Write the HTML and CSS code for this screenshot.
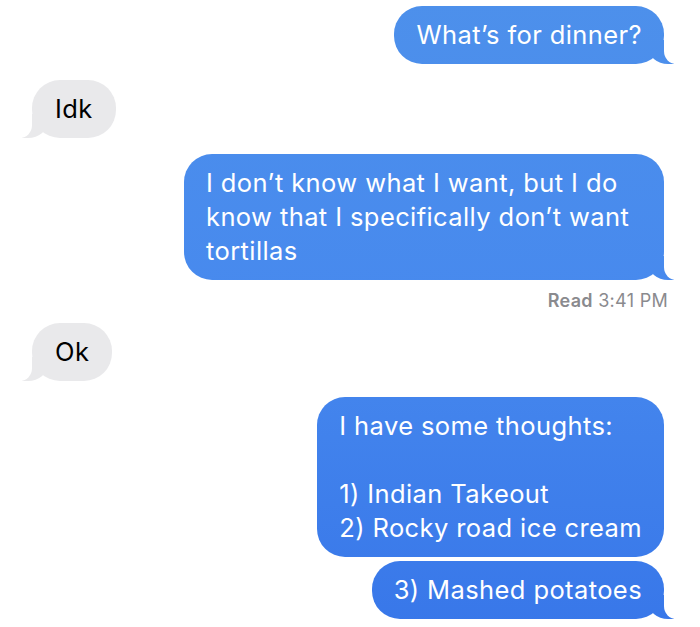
FILE: index.html
```html
<!DOCTYPE html>
<html>
  <head>
    <title>Messages</title>
    <link rel="stylesheet" href="styles.css">
  </head>
  <body>
    <div class="thread">
      <div class="bubble sent tail">What’s for dinner?</div>
      <div class="bubble received tail">Idk</div>
      <div class="bubble sent tail">I don’t know what I want, but I do know that I specifically don’t want tortillas</div>
      <div class="status"><b>Read</b> 3:41 PM</div>
      <div class="bubble received tail">Ok</div>
      <div class="bubble sent">I have some thoughts:<br><br>1) Indian Takeout<br>2) Rocky road ice cream</div>
      <div class="bubble sent tail">3) Mashed potatoes</div>
    </div>
  </body>
</html>
```

FILE: styles.css
```css
body {
  margin: 0;
  background: #fff;
  font-family: Inter, "Open Sans", sans-serif;
}

.thread {
  display: flex;
  flex-direction: column;
  gap: 16px;
  padding: 6px 36px 0 32px;
}

.bubble {
  position: relative;
  max-width: 436px;
  padding: 12px 22px;
  border-radius: 28px;
  font-size: 25.5px;
  line-height: 34px;
  letter-spacing: 0.4px;
}

.sent {
  align-self: flex-end;
  color: #fff;
  background: linear-gradient(180deg, #4d90eb 0%, #4789ee 50%, #3877e9 100%) fixed;
}

.received {
  align-self: flex-start;
  padding: 12px 23px;
  color: #000;
  background: #e9e9eb;
}

.sent + .sent {
  margin-top: -12px;
}

.tail::before,
.tail::after {
  content: "";
  position: absolute;
  bottom: 0;
  height: 24px;
}

.sent.tail::before {
  right: -10px;
  width: 26px;
  background: inherit;
  border-bottom-left-radius: 20px 17px;
}

.sent.tail::after {
  right: -30px;
  width: 30px;
  background: #fff;
  border-bottom-left-radius: 12px 13px;
}

.received.tail::before {
  left: -10px;
  width: 26px;
  background: #e9e9eb;
  border-bottom-right-radius: 20px 17px;
}

.received.tail::after {
  left: -30px;
  width: 30px;
  background: #fff;
  border-bottom-right-radius: 12px 13px;
}

.status {
  align-self: flex-end;
  margin: -6px -4px -4px 0;
  font-size: 18px;
  letter-spacing: 0.3px;
  color: #8a8a8e;
}

.status b {
  font-weight: 600;
}
```
